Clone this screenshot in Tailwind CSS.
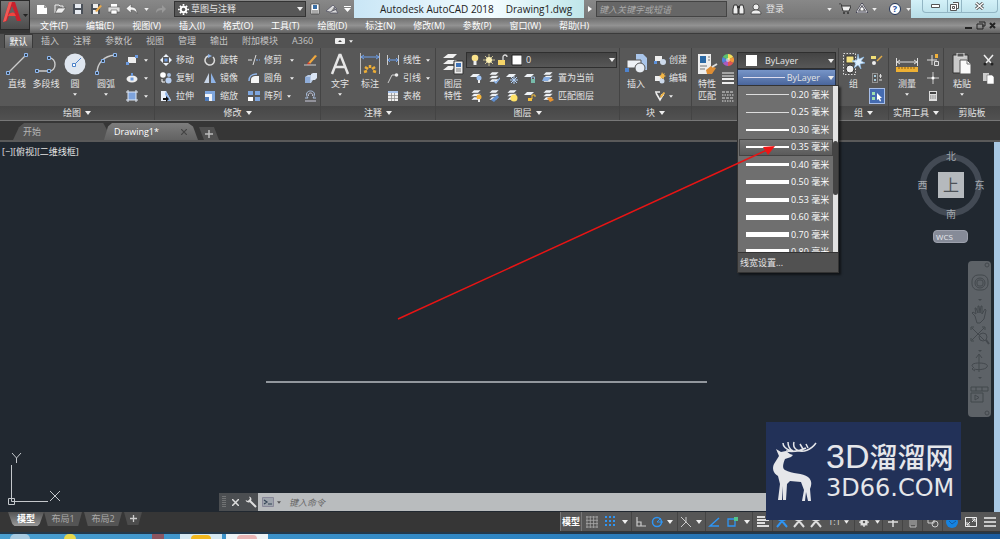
<!DOCTYPE html>
<html lang="zh-CN">
<head>
<meta charset="utf-8">
<title>Autodesk AutoCAD 2018 - Drawing1.dwg</title>
<script src="https://cdn.jsdelivr.net/npm/@tailwindcss/browser@4"></script>
</head>
<body class="flex min-h-screen flex-col overflow-hidden bg-[#363636] font-['Open_Sans','Noto_Sans_CJK_SC',sans-serif] text-[9px] leading-3 text-[#e4e4e4]">
<svg class="hidden">
  <symbol id="dn" viewBox="0 0 6 4"><path d="M0 0h6L3 4z" fill="#eee"/></symbol>
  <symbol id="sheets" viewBox="0 0 12 12"><path d="M4 0h7L8 3H1zM4 3.500h7l-3 3H1zM4 7h7l-3 3H1z" fill="#eef2f6" stroke="#444" stroke-width=".4"/></symbol>
  <symbol id="sheet" viewBox="0 0 12 12"><path d="M3 2h7L7 5H0z" fill="#eef2f6"/></symbol>
  <symbol id="person" viewBox="0 0 12 12"><path d="M6 1v4M6 5L1 11M6 5l5 6M2 3l4 2 4-2" fill="none" stroke="currentColor" stroke-width="2"/></symbol>
</svg>

<!-- title bar and menu bar -->
<header class="flex h-[33px] shrink-0">
  <button class="relative h-[30px] w-[30px] shrink-0 border border-[#2a2a2a] bg-linear-to-b from-[#777] to-[#4c4c4c]" aria-label="应用程序菜单">
    <svg class="h-7 w-7" viewBox="0 0 28 28"><path d="M8 1h6l6 19h-4l-2-5H8l-2 5-4 1z" fill="#c8202c"/><path d="M11 5l3 7H8z" fill="#65605f"/><path d="M8 1h3L5 20l-3 1z" fill="#ed5a56"/><path d="M8 13c3-2 5-2 6 0l1 2H7z" fill="#f0443f"/><path d="M22 13h5l-2.500 3z" fill="#222"/></svg>
  </button>
  <div class="flex min-w-0 flex-1 flex-col">
    <div class="flex h-[18px] items-center bg-linear-to-b from-[#888] to-[#777]">
      <div class="flex w-[144px] shrink-0 items-center gap-[6px] pl-[6px]">
        <button aria-label="新建"><svg class="h-3 w-3" viewBox="0 0 12 12"><path d="M1 2h7l3 3v6H1z" fill="#fff"/><path d="M8 2v3h3z" fill="#999"/></svg></button>
        <button aria-label="打开"><svg class="h-3 w-3" viewBox="0 0 12 12"><path d="M1 10V2h4l1 1h3v2" fill="none" stroke="#eee"/><path d="M1 10l3-5h8l-4 5z" fill="#eee" stroke="#555" stroke-width=".6"/></svg></button>
        <button aria-label="保存"><svg class="h-3 w-3" viewBox="0 0 12 12"><path d="M1 1h10v10H1z" fill="#4a5058"/><path d="M3 1h6v4H3zM3 7h6v4H3z" fill="#e8ecf2"/></svg></button>
        <button aria-label="另存为"><svg class="h-3 w-3" viewBox="0 0 12 12"><path d="M1 1h9v10H1z" fill="#4a5058"/><path d="M3 1h5v4H3zM3 7h5v4H3z" fill="#eee"/><path d="M5 8l5-6 2 1-5 6z" fill="#e9a94b"/></svg></button>
        <button aria-label="打印"><svg class="h-3 w-3" viewBox="0 0 12 12"><path d="M3 1h6v4H3z" fill="#fff"/><path d="M0 4h12v5H0z" fill="#ddd" stroke="#555" stroke-width=".6"/><path d="M3 7h6v4H3z" fill="#fff" stroke="#555" stroke-width=".6"/></svg></button>
        <button aria-label="放弃"><svg class="h-3 w-3" viewBox="0 0 12 12"><path d="M5 1v3c5 0 6 3 6 7-1-3-3-4-6-4v3L0 5.500z" fill="#f4f4f4" stroke="#555" stroke-width=".5"/></svg></button>
        <svg class="h-[3px] w-[5px]"><use href="#dn"/></svg>
        <button aria-label="重做"><svg class="h-3 w-3" viewBox="0 0 12 12"><path d="M7 2v3C3 5 1 6 1 10c1-2 3-3 6-3v3l4-4z" fill="#999"/></svg></button>
      </div>
      <div class="relative h-4 w-[132px] shrink-0 border border-[#333] bg-[#575757]">
        <svg class="absolute top-[2px] left-[3px] h-[11px] w-[11px]" viewBox="0 0 12 12"><circle cx="6" cy="6" r="3" fill="none" stroke="#fff" stroke-width="2"/><path d="M6 0v2M6 10v2M0 6h2M10 6h2M2 2l1.500 1.500M8.500 8.500L10 10M10 2L8.500 3.500M2 10l1.500-1.500" stroke="#fff" stroke-width="1.800"/></svg>
        <select aria-label="工作空间" class="block h-full w-full appearance-none pl-4 text-[9px] leading-3"><option>草图与注释</option></select>
        <svg class="absolute top-[5px] right-[2px] h-1 w-[6px]"><use href="#dn"/></svg>
      </div>
      <div class="flex w-[48px] shrink-0 items-center gap-[5px] pl-1">
        <svg class="h-3 w-[10px]" viewBox="0 0 10 12"><path d="M1 1h8v10H1z" fill="#fff" stroke="#333" stroke-width=".6"/><path d="M3 2h4v4H3z" fill="#3a6ea5"/><path d="M2 8h6M2 10h6" stroke="#555"/></svg>
        <svg class="h-3 w-[14px]" viewBox="0 0 14 12"><path d="M1 8l7-6 4 4-7 3zM5 10h8L9 4" fill="#ddd" stroke="#556" stroke-width=".8"/></svg>
        <svg class="h-[6px] w-[7px]" viewBox="0 0 7 6"><path d="M0 0h7v1H0zM0 2h7L3.500 6z" fill="#fff"/></svg>
      </div>
      <div class="flex h-full min-w-0 flex-1 items-center gap-3 bg-linear-to-r from-[#c9e6f6] via-[#f3fcff] via-60% to-[#bfe6ea] pl-[26px] text-[10px] whitespace-pre text-[#222]"><span>Autodesk AutoCAD 2018</span><span>Drawing1.dwg</span></div>
      <div class="flex h-full w-[416px] shrink-0 items-center">
        <svg class="mx-1 h-[6px] w-1" viewBox="0 0 4 6"><path d="M0 0l4 3-4 3z" fill="#fff"/></svg>
        <input aria-label="搜索" placeholder="键入关键字或短语" class="h-4 w-[131px] border border-[#444] bg-[#666] px-[2px] text-[9px] italic placeholder:text-[#aaa]">
        <div class="flex flex-1 items-center pl-[5px] whitespace-nowrap">
          <svg class="h-3 w-[13px]" viewBox="0 0 13 12"><path d="M2 2h3l1 4v5H1V6zM8 2h3l1 4v5H7V6z" fill="#eee" stroke="#333"/><path d="M5 4h3" stroke="#333" stroke-width="2"/></svg>
          <svg class="ml-[5px] h-3 w-3" viewBox="0 0 12 12"><circle cx="6" cy="4" r="3" fill="#eee" stroke="#333" stroke-width=".7"/><path d="M1 11c0-3 2-4 5-4s5 1 5 4z" fill="#eee" stroke="#333" stroke-width=".7"/></svg>
          <a href="#" class="ml-1">登录</a>
          <svg class="ml-[43px] h-[3px] w-[5px]"><use href="#dn"/></svg>
          <svg class="ml-[7px] h-3 w-3" viewBox="0 0 12 12"><path d="M0 1h2l2 7h6l2-5H3" fill="#eee" stroke="#333"/><circle cx="5" cy="10" r="1" fill="#333"/><circle cx="9" cy="10" r="1" fill="#333"/></svg>
          <svg class="ml-[5px] h-3 w-3" viewBox="0 0 12 12"><path d="M6 1l5 8H1z" fill="none" stroke="#445" stroke-width="2"/><path d="M6 1l5 8H1z" fill="none" stroke="#ddd"/><circle cx="6" cy="6" r="1.500" fill="#fff"/></svg>
          <svg class="ml-[4px] h-[3px] w-[5px]"><use href="#dn"/></svg>
          <button class="ml-3 flex h-3 w-3 items-center justify-center rounded-full border border-[#235] bg-white text-[9px] font-bold text-[#1d4fa0]" aria-label="帮助">?</button>
          <svg class="ml-[5px] h-[3px] w-[5px]"><use href="#dn"/></svg>
        </div>
        <div class="h-full w-[89px] bg-linear-to-b from-[#d3f1f8] to-[#b7dde7] pr-[2px] pl-[11px]">
          <div class="flex h-[13px] rounded-b border border-t-0 border-[#92b6c4] text-[#666]">
            <button aria-label="最小化" class="flex w-[25px] items-center justify-center border-r border-[#92b6c4]"><svg class="h-1 w-[9px]"><path d="M.5.500h8v3h-8z" fill="#fff" stroke="#555"/></svg></button>
            <button aria-label="还原" class="flex w-[14px] items-center justify-center border-r border-[#92b6c4]"><svg class="h-[9px] w-[9px]" viewBox="0 0 9 9"><path d="M3 .5h5.500v6H7M.5 2.500h6v6h-6zM2.500 4.500h2v2h-2z" fill="#fff" stroke="#555"/></svg></button>
            <button aria-label="关闭" class="flex flex-1 items-center justify-center"><svg class="h-2 w-[9px]" viewBox="0 0 9 8"><path d="M1 1l7 6M8 1L1 7" stroke="#555" stroke-width="3"/><path d="M1 1l7 6M8 1L1 7" stroke="#fff" stroke-width="1.300"/></svg></button>
          </div>
        </div>
      </div>
    </div>
    <nav class="flex h-[15px] items-center gap-[18px] bg-linear-to-b from-[#707070] via-[#929292] to-[#606060] pl-[10px] whitespace-nowrap text-white" aria-label="菜单栏">
      <button>文件(F)</button><button>编辑(E)</button><button>视图(V)</button><button>插入(I)</button><button>格式(O)</button><button>工具(T)</button><button>绘图(D)</button><button>标注(N)</button><button>修改(M)</button><button>参数(P)</button><button>窗口(W)</button><button>帮助(H)</button>
      <svg class="mr-1 ml-auto h-[9px] w-8" viewBox="0 0 32 9"><path d="M1 7h7M26 2l5 5M31 2l-5 5" stroke="#222" stroke-width="2"/><path d="M15 1h6v4h-3M13 3h6v5h-6z" fill="none" stroke="#222"/></svg>
    </nav>
  </div>
</header>

<!-- ribbon tabs -->
<nav class="flex h-[15px] shrink-0 items-center gap-[14px] border-t border-[#3b3b3b] bg-[#525252] pl-1 text-[#c4c4c4]" aria-label="功能区">
  <button class="-mr-[6px] h-[14px] w-[29px] border border-b-0 border-[#3a3a3a] bg-linear-to-b from-[#858585] to-[#626262] text-white">默认</button>
  <button>插入</button><button>注释</button><button>参数化</button><button>视图</button><button>管理</button><button>输出</button><button>附加模块</button><button>A360</button>
  <span class="ml-2 flex items-center gap-1"><svg class="h-[6px] w-[10px]" viewBox="0 0 10 6"><rect width="10" height="6" rx="1" fill="#eee"/><path d="M3 4l2-2 2 2z" fill="#444"/></svg><svg class="h-[3px] w-1"><use href="#dn"/></svg></span>
</nav>

<!-- ribbon panels -->
<main class="contents">
<div class="grid h-[73px] shrink-0 grid-cols-[155fr_166fr_115fr_184fr_72fr_147fr_50fr_55fr_56fr] border-b border-[#777] bg-[#585858] whitespace-nowrap">

  <section class="flex min-w-0 flex-col border-r border-[#444]">
    <div class="flex flex-1 pt-[3px] pl-1">
      <button class="flex w-[26px] flex-col items-center gap-[3px] pt-[2px]"><svg class="h-[22px] w-[22px]" viewBox="0 0 22 22"><path d="M2 20L20 2" stroke="#ccc" stroke-width="1.300"/><path d="M.5 18.500h3v3h-3zM18.500.500h3v3h-3z" fill="#345" stroke="#8fb8f0"/></svg>直线</button>
      <button class="flex w-8 flex-col items-center gap-[3px] pt-[2px]"><svg class="h-[22px] w-6" viewBox="0 0 24 22"><path d="M3 18h12c8 0 8-13 0-13" fill="none" stroke="#ccc" stroke-width="1.400"/><path d="M1.500 16.500h3v3h-3zM13.500 16.500h3v3h-3zM13.500 3.500h3v3h-3z" fill="#345" stroke="#8fb8f0"/></svg>多段线</button>
      <button class="flex w-[26px] flex-col items-center gap-[3px] pt-[2px]"><svg class="h-[22px] w-[22px]" viewBox="0 0 22 22"><circle cx="11" cy="11" r="10.500" fill="#dfe6ef"/><path d="M10 12l7-7" stroke="#4d82c8"/><path d="M8.500 10.500h3v3h-3z" fill="#fff" stroke="#4d82c8"/></svg>圆<svg class="h-[3px] w-1"><use href="#dn"/></svg></button>
      <button class="flex w-9 flex-col items-center gap-[3px] pt-[2px]"><svg class="h-[22px] w-[22px]" viewBox="0 0 22 22"><path d="M2 20C2 10 9 3 20 2" fill="none" stroke="#ccc" stroke-width="1.400"/><path d="M.5 18.500h3v3h-3zM6.500 6.500h3v3h-3zM18.500.500h3v3h-3z" fill="#345" stroke="#8fb8f0"/></svg>圆弧<svg class="h-[3px] w-1"><use href="#dn"/></svg></button>
      <div class="grid h-[54px] grid-rows-3 items-center pl-[2px]">
        <button class="flex items-center gap-[6px]" aria-label="矩形"><svg class="h-3 w-3" viewBox="0 0 12 12"><path d="M2 3h8v6H2z" fill="#eee"/><path d="M0 8h3v3H0zM9 1h3v3H9z" fill="#6c9be0"/></svg><svg class="h-[3px] w-1"><use href="#dn"/></svg></button>
        <button class="flex items-center gap-[6px]" aria-label="椭圆"><svg class="h-3 w-3" viewBox="0 0 12 12"><ellipse cx="6" cy="7" rx="5.500" ry="3.500" fill="#eee"/><path d="M4.500 5.500h3v3h-3zM5 1h2v3H5z" fill="#6c9be0"/></svg><svg class="h-[3px] w-1"><use href="#dn"/></svg></button>
        <button class="flex items-center gap-[6px]" aria-label="图案填充"><svg class="h-3 w-3" viewBox="0 0 12 12"><path d="M2 2h8v8H2z" fill="#7ea3dc"/><path d="M2 0v12M10 0v12M0 2h12M0 10h12" stroke="#dfe8f5"/></svg><svg class="h-[3px] w-1"><use href="#dn"/></svg></button>
      </div>
    </div>
    <h2 class="flex h-[14px] items-center justify-center gap-1 bg-linear-to-b from-[#474747] to-[#515151]">绘图 <svg class="h-[4px] w-[6px]"><use href="#dn"/></svg></h2>
  </section>

  <section class="flex min-w-0 flex-col border-r border-[#444]">
    <div class="flex flex-1 gap-[10px] pt-[3px] pl-[5px]">
      <div class="grid h-[54px] grid-rows-3 items-center">
        <button class="flex items-center gap-1"><svg class="h-3 w-3" viewBox="0 0 12 12"><path d="M6 0l3 3H3zM6 12l3-3H3zM0 6l3-3v6zM12 6L9 3v6z" fill="#eef3fa"/><path d="M4.500 4.500h3v3h-3z" fill="#6c9be0"/></svg>移动</button>
        <button class="flex items-center gap-1"><svg class="h-3 w-3" viewBox="0 0 12 12"><circle cx="3" cy="3" r="2.800" fill="#fff"/><circle cx="9" cy="3" r="2" fill="#a7bddd"/><circle cx="8.500" cy="8.500" r="3" fill="#b9d0f2"/><path d="M2 7v3h3" fill="none" stroke="#fff"/></svg>复制</button>
        <button class="flex items-center gap-1"><svg class="h-3 w-3" viewBox="0 0 12 12"><path d="M1 1h5l5 9v1H1z" fill="#e9eff8"/><path d="M6 1l5 10H8L5 4z" fill="#8fb4e8"/><path d="M3 8h3V6l3 3-3 3v-2H3z" fill="#111"/></svg>拉伸</button>
      </div>
      <div class="grid h-[54px] grid-rows-3 items-center">
        <button class="flex items-center gap-1"><svg class="h-3 w-3" viewBox="0 0 12 12"><path d="M4 2a4.700 4.700 0 1 0 5 1" fill="none" stroke="#ddd" stroke-width="1.500"/><path d="M4 0l4 2-4 2z" fill="#8fb4e8"/></svg>旋转</button>
        <button class="flex items-center gap-1"><svg class="h-3 w-3" viewBox="0 0 12 12"><path d="M5 1v10H0z" fill="#c7d4e6"/><path d="M7 1v10h5z" fill="#8fb4e8"/></svg>镜像</button>
        <button class="flex items-center gap-1"><svg class="h-3 w-3" viewBox="0 0 12 12"><path d="M1 1h10v10H1z" fill="#7ea6de"/><path d="M1 4h7v7H1z" fill="#f2f5fa"/><path d="M1 7h4v4H1z" fill="#4c79b9"/></svg>缩放</button>
      </div>
      <div class="grid h-[54px] grid-rows-3 items-center">
        <button class="flex items-center gap-1"><svg class="h-3 w-3" viewBox="0 0 12 12"><path d="M0 6h4M5 11l3-10" stroke="#ddd"/><path d="M8 6h4" stroke="#7daaf0" stroke-dasharray="2 1"/></svg>修剪<svg class="ml-1 h-[3px] w-1"><use href="#dn"/></svg></button>
        <button class="flex items-center gap-1"><svg class="h-3 w-3" viewBox="0 0 12 12"><path d="M3 11V8c0-3 2-4 5-4h3v7z" fill="#f4f4f4"/><path d="M1 9c0-5 2-7 8-7" stroke="#8fb4e8" fill="none" stroke-width="1.500"/></svg>圆角<svg class="ml-1 h-[3px] w-1"><use href="#dn"/></svg></button>
        <button class="flex items-center gap-1"><svg class="h-3 w-3" viewBox="0 0 12 12"><path d="M0 1h5v4H0zM7 1h5v4H7zM7 7h5v4H7z" fill="#7ea6de"/><path d="M0 7h5v4H0z" fill="#fff"/></svg>阵列<svg class="ml-px h-[3px] w-1"><use href="#dn"/></svg></button>
      </div>
      <div class="grid h-[54px] grid-rows-3 items-center">
        <button aria-label="删除"><svg class="h-3 w-[13px]" viewBox="0 0 13 12"><path d="M4 9l7-8 2 1-7 8z" fill="#f0a83e"/><path d="M3 11l1-3 3 2z" fill="#d8432f"/><path d="M0 11h12" stroke="#ccc"/></svg></button>
        <button aria-label="分解"><svg class="h-3 w-[13px]" viewBox="0 0 13 12"><path d="M1 5l3-2h5v5l-2 3H1z" fill="#b9cbe5"/><path d="M7 2l2-1h4v5l-2 2H7z" fill="#dbe6f5"/><path d="M1 5h5v6H1z" fill="#8fadd9"/></svg></button>
        <button aria-label="偏移"><svg class="h-3 w-[13px]" viewBox="0 0 13 12"><path d="M1 8h3C1 4 3 1 6.500 1S12 4 9 8h3" fill="none" stroke="#a9bfdf"/><path d="M1 11h11M4.500 6c-1-2 1-3 2-3s3 1 2 3" fill="none" stroke="#ccd"/></svg></button>
      </div>
    </div>
    <h2 class="flex h-[14px] items-center justify-center gap-1 bg-linear-to-b from-[#474747] to-[#515151]">修改 <svg class="h-[4px] w-[6px]"><use href="#dn"/></svg></h2>
  </section>

  <section class="flex min-w-0 flex-col border-r border-[#444]">
    <div class="flex flex-1 pt-[3px] pl-1">
      <button class="flex w-[30px] flex-col items-center gap-[3px] pt-[2px]"><svg class="h-[22px] w-[22px]" viewBox="0 0 22 22"><path d="M3 21L10.500 2h1L19 21M6 14h10" fill="none" stroke="#e6e6e6" stroke-width="2.500"/></svg>文字<svg class="h-[3px] w-1"><use href="#dn"/></svg></button>
      <button class="flex w-[30px] flex-col items-center gap-[3px] pt-[2px]"><svg class="h-[22px] w-[22px]" viewBox="0 0 22 22"><path d="M1.500 0v21M20.500 0v21" stroke="#bbb"/><path d="M2 4h18M5 2L2 4l3 2M17 2l3 2-3 2" fill="none" stroke="#6da0ed"/><path d="M5 19l3-1M6 14l3 2M11 12v3M16 14l-3 2M17 19l-3-1" stroke="#edae37" stroke-width="2.500"/></svg>标注</button>
      <div class="grid h-[54px] grid-rows-3 items-center pl-[2px]">
        <button class="flex items-center gap-1"><svg class="h-3 w-3" viewBox="0 0 12 12"><path d="M.5 1v10M11.500 1v10" stroke="#ccc"/><path d="M1 6h10M3 4L1 6l2 2M9 4l2 2-2 2" fill="none" stroke="#6da0ed"/></svg>线性<svg class="ml-px h-[3px] w-1"><use href="#dn"/></svg></button>
        <button class="flex items-center gap-1"><svg class="h-3 w-3" viewBox="0 0 12 12"><path d="M1 11l4-8h4" fill="none" stroke="#ccc"/><circle cx="9.500" cy="3" r="1.800" fill="#eee"/></svg>引线<svg class="ml-px h-[3px] w-1"><use href="#dn"/></svg></button>
        <button class="flex items-center gap-1"><svg class="h-3 w-3" viewBox="0 0 12 12"><path d="M1 1h10v10H1z" fill="#eee"/><path d="M1 1h10v2H1z" fill="#a8c3ea"/><path d="M4.500 3v8M7.500 3v8M1 5.500h10M1 8.500h10" stroke="#888" stroke-width=".7"/></svg>表格</button>
      </div>
    </div>
    <h2 class="flex h-[14px] items-center justify-center gap-1 bg-linear-to-b from-[#474747] to-[#515151]">注释 <svg class="h-[4px] w-[6px]"><use href="#dn"/></svg></h2>
  </section>

  <section class="flex min-w-0 flex-col border-r border-[#444]">
    <div class="flex flex-1 pt-[3px] pr-[2px] pl-1">
      <button class="flex w-[26px] flex-col items-center pt-[2px]"><svg class="mb-[3px] h-[22px] w-[22px]" viewBox="0 0 22 22"><path d="M6 1h9l-4 4H1zM6 7h9l-4 4H1zM6 13h8l-4 4H1z" fill="#f0f0f0"/><path d="M12 8h9v13h-9z" fill="#eee" stroke="#333"/><path d="M14 10h5v4h-5z" fill="#3f73b8"/><path d="M14 16h5M14 18h5" stroke="#777"/></svg>图层<br>特性</button>
      <div class="grid h-[54px] min-w-0 flex-1 grid-rows-3 items-center">
        <div class="relative h-4 border border-[#2f2f2f] bg-linear-to-b from-[#444] to-[#575757]">
          <svg class="absolute top-[1px] left-[3px] h-3 w-[52px]" viewBox="0 0 52 12"><circle cx="5" cy="4" r="3.300" fill="#fbe38b"/><path d="M3.500 7h3v4h-3z" fill="#eee"/><path d="M19 0v12M13 6h12M15 2l8 8M23 2l-8 8" stroke="#e7d9a0" stroke-width=".8"/><circle cx="19" cy="6" r="3" fill="#fff3b5"/><path d="M28 6h7v5h-7z" fill="#f5d468"/><path d="M33 6V3a2 2 0 0 1 4 0" fill="none" stroke="#ddd" stroke-width="1.300"/><path d="M42 1h10v10H42z" fill="#fff" stroke="#222"/></svg>
          <select aria-label="图层" class="block h-full w-full appearance-none pl-[59px] text-[9px] leading-3"><option>0</option></select>
          <svg class="absolute top-[5px] right-[1px] h-1 w-[6px]"><use href="#dn"/></svg>
        </div>
        <div class="flex items-center gap-[6px] pl-1">
          <svg class="h-3 w-3" viewBox="0 0 12 12"><use href="#sheet"/><circle cx="9" cy="6" r="2.500" fill="#9fc4f5"/><path d="M8 8h2v3H8z" fill="#eee"/></svg>
          <svg class="h-3 w-3" viewBox="0 0 12 12"><use href="#sheets"/><path d="M6 9l2 2 4-5" fill="none" stroke="#8db6ee" stroke-width="1.300"/></svg>
          <svg class="h-3 w-3" viewBox="0 0 12 12"><use href="#sheet"/><path d="M8 4v8M4 8h8M5 5l6 6M11 5l-6 6" stroke="#b0cff7"/></svg>
          <svg class="h-3 w-3" viewBox="0 0 12 12"><use href="#sheet"/><path d="M7 7h4v4H7z" fill="#7ba"/><path d="M7.500 7V5h3v2" fill="none" stroke="#9bd"/></svg>
          <button class="flex items-center gap-1"><svg class="h-3 w-3" viewBox="0 0 12 12"><use href="#sheets"/><path d="M2 5h7l-3 4H0z" fill="#88aee2"/></svg>置为当前</button>
        </div>
        <div class="flex items-center gap-[6px] pl-1">
          <svg class="h-3 w-3" viewBox="0 0 12 12"><use href="#sheets"/><circle cx="9" cy="7" r="2.500" fill="#f7b63c"/><path d="M8 9h2v3H8z" fill="#eee"/></svg>
          <svg class="h-3 w-3" viewBox="0 0 12 12"><use href="#sheets"/><path d="M3 10l6-5 2 2-5 5z" fill="#608fd0"/></svg>
          <svg class="h-3 w-3" viewBox="0 0 12 12"><use href="#sheets"/><circle cx="8" cy="8" r="3.500" fill="#ffe267"/></svg>
          <svg class="h-3 w-3" viewBox="0 0 12 12"><use href="#sheet"/><path d="M4 8h4v3H4z" fill="#f4bf3c"/><path d="M8 9V5h3v2" fill="none" stroke="#f4bf3c"/></svg>
          <button class="flex items-center gap-1"><svg class="h-3 w-3" viewBox="0 0 12 12"><use href="#sheets"/><path d="M5 8l4-1 3 3-4 2z" fill="#e8932f"/></svg>匹配图层</button>
        </div>
      </div>
    </div>
    <h2 class="flex h-[14px] items-center justify-center gap-1 bg-linear-to-b from-[#474747] to-[#515151]">图层 <svg class="h-[4px] w-[6px]"><use href="#dn"/></svg></h2>
  </section>

  <section class="flex min-w-0 flex-col border-r border-[#444]">
    <div class="flex flex-1 gap-1 pt-[3px] pl-1">
      <button class="flex w-[24px] flex-col items-center gap-[3px] pt-[2px]"><svg class="h-[22px] w-6" viewBox="0 0 24 22"><path d="M12 1h7l4 4v12H12z" fill="#a9c5ea"/><path d="M3 7h14v8H3z" fill="#eef1f5" stroke="#555"/><circle cx="16" cy="15" r="5" fill="#e7ecf2" stroke="#555"/><path d="M1 15h4v4H1z" fill="#4f84cf"/></svg>插入</button>
      <div class="grid h-[54px] grid-rows-3 items-center pl-[2px]">
        <button class="flex items-center gap-[3px]"><svg class="h-3 w-3" viewBox="0 0 12 12"><path d="M1 2h7v5H1z" fill="#eee"/><circle cx="9" cy="8" r="3" fill="#ccd9ea"/><path d="M0 7h3v3H0z" fill="#5c90d9"/></svg>创建</button>
        <button class="flex items-center gap-[3px]"><svg class="h-3 w-3" viewBox="0 0 12 12"><path d="M1 4h7v5H1z" fill="#eee"/><circle cx="8" cy="9" r="2.500" fill="#ccd9ea"/><path d="M8 0l1 2 2-1-1 2 2 1-2 1 0 2-2-1-2 1 1-2-2-1 2-1z" fill="#f2b545"/></svg>编辑</button>
        <button class="flex items-center gap-[3px]" aria-label="块属性"><svg class="h-3 w-3" viewBox="0 0 12 12"><path d="M2 3l4 7 4-7M1 2h5M7 5h3" fill="none" stroke="#eee" stroke-width="1.600"/><path d="M6 6l4-4 1 1-4 5z" fill="#efb13e"/></svg><svg class="h-[3px] w-1"><use href="#dn"/></svg></button>
      </div>
    </div>
    <h2 class="flex h-[14px] items-center justify-center gap-1 bg-linear-to-b from-[#474747] to-[#515151]">块 <svg class="h-[4px] w-[6px]"><use href="#dn"/></svg></h2>
  </section>

  <section class="flex min-w-0 flex-col border-r border-[#444]">
    <div class="flex flex-1 pt-[3px] pr-[2px] pl-[3px]">
      <button class="flex w-[24px] flex-col items-center pt-[2px]"><svg class="mb-[3px] h-[22px] w-[22px]" viewBox="0 0 22 22"><path d="M2 1h13v20H2z" fill="#eee"/><path d="M4 3h6v7H4z" fill="#2b69a5"/><path d="M12 4h2M12 7h2M4 13h7M4 16h5" stroke="#777"/><path d="M10 17l5-4 5 2-4 6h-5z" fill="#dd8d34"/><path d="M16 14l5-3" stroke="#ddd" stroke-width="2"/></svg>特性<br>匹配</button>
      <div class="grid h-[54px] w-[18px] grid-rows-3 items-center justify-items-center">
        <svg class="h-3 w-3" viewBox="0 0 12 12"><path d="M6 6V0a6 6 0 0 1 5.200 3z" fill="#f4e05a"/><path d="M6 6l5.200-3a6 6 0 0 1 0 6z" fill="#f39a3b"/><path d="M6 6l5.200 3A6 6 0 0 1 6 12z" fill="#e35555"/><path d="M6 6v6A6 6 0 0 1 .8 9z" fill="#a85bc0"/><path d="M6 6L.8 9a6 6 0 0 1 0-6z" fill="#5085dc"/><path d="M6 6L.8 3A6 6 0 0 1 6 0z" fill="#5cc06d"/><circle cx="6" cy="6" r="2" fill="#fff8"/></svg>
        <svg class="h-3 w-3" viewBox="0 0 12 12"><path d="M0 1h12M0 4h12" stroke="#eee"/><path d="M0 7h12M0 11h12" stroke="#eee" stroke-width="2"/></svg>
        <svg class="h-3 w-3" viewBox="0 0 12 12"><path d="M0 2h12M0 8h12" stroke="#ddd" stroke-dasharray="3 1"/><path d="M0 5h12M0 11h12" stroke="#ddd" stroke-dasharray="1.500 1"/></svg>
      </div>
      <div class="relative min-w-0 flex-1 pt-[1px]">
        <div class="relative h-[17px] border border-[#2f2f2f] bg-linear-to-b from-[#444] to-[#575757]">
          <span class="absolute top-[2px] left-2 h-[11px] w-[11px] bg-white"></span>
          <select aria-label="颜色" class="block h-full w-full appearance-none pl-[27px] text-[9px] leading-3"><option>ByLayer</option></select>
          <svg class="absolute top-[6px] right-[1px] h-1 w-[6px]"><use href="#dn"/></svg>
        </div>
        <button class="flex h-[17px] w-full items-center border border-[#26344c] bg-linear-to-b from-[#7795c8] to-[#4a669c] pr-[1px] pl-[5px]" aria-expanded="true" aria-haspopup="listbox"><span class="mr-[2px] h-px flex-1 bg-[#dde]"></span>ByLayer<svg class="ml-2 h-1 w-[6px]"><use href="#dn"/></svg></button>
        <!-- lineweight list -->
        <div class="absolute top-[34px] left-0 z-10 w-[102px] border border-[#333] bg-[#6f6f6f] shadow-[2px_2px_2px_#0008]">
          <div class="flex h-[166px] overflow-hidden">
            <div role="listbox" aria-label="线宽" class="grid h-[175px] flex-1 grid-rows-10 pl-[1px] text-white">
              <div role="option" class="flex items-center gap-[2px] pl-[7px]"><i class="h-px w-[43px] bg-[#ddd]"></i>0.20 毫米</div>
              <div role="option" class="flex items-center gap-[2px] pl-[7px]"><i class="h-px w-[43px] bg-[#ddd]"></i>0.25 毫米</div>
              <div role="option" class="flex items-center gap-[2px] pl-[7px]"><i class="h-[2px] w-[43px] bg-white"></i>0.30 毫米</div>
              <div role="option" aria-selected="true" class="flex items-center gap-[2px] bg-linear-to-b from-[#777] to-[#595959] pl-[7px] outline outline-[#444] -outline-offset-1"><i class="h-[2px] w-[43px] bg-white"></i>0.35 毫米</div>
              <div role="option" class="flex items-center gap-[2px] pl-[7px]"><i class="h-[3px] w-[43px] bg-white"></i>0.40 毫米</div>
              <div role="option" class="flex items-center gap-[2px] pl-[7px]"><i class="h-[4px] w-[43px] bg-white"></i>0.50 毫米</div>
              <div role="option" class="flex items-center gap-[2px] pl-[7px]"><i class="h-[4px] w-[43px] bg-white"></i>0.53 毫米</div>
              <div role="option" class="flex items-center gap-[2px] pl-[7px]"><i class="h-[5px] w-[43px] bg-white"></i>0.60 毫米</div>
              <div role="option" class="flex items-center gap-[2px] pl-[7px]"><i class="h-[5px] w-[43px] bg-white"></i>0.70 毫米</div>
              <div role="option" class="flex items-center gap-[2px] pl-[7px]"><i class="h-[6px] w-[43px] bg-white"></i>0.80 毫米</div>
            </div>
            <div class="w-[5px] bg-[#e2e2e2] pt-[55px]"><div class="h-[54px] rounded-sm bg-[#444]"></div></div>
          </div>
          <button class="block h-5 w-full border-t border-[#333] bg-[#515151] pl-[2px] text-left">线宽设置...</button>
        </div>
      </div>
    </div>
    <h2 class="flex h-[14px] items-center bg-linear-to-b from-[#474747] to-[#515151]" aria-label="特性"></h2>
  </section>

  <section class="flex min-w-0 flex-col border-r border-[#444]">
    <div class="flex flex-1 gap-1 pt-[3px] pl-[3px]">
      <button class="flex w-[23px] flex-col items-center gap-[3px] pt-[2px]"><svg class="h-[22px] w-[23px]" viewBox="0 0 23 22"><path d="M1.500.500h12v21h-12z" fill="none" stroke="#ddd" stroke-dasharray="1.500 1.500"/><path d="M4 3h8v7H4z" fill="#f4e282" stroke="#333"/><circle cx="8" cy="16" r="4" fill="#eee" stroke="#333"/><path d="M16 1l1 5 5-2-3 4 4 2-5 1 1 5-3-4-4 3 2-5-4-2 5-1z" fill="#dff0ff" stroke="#8dc0ee" stroke-width=".6"/></svg>组</button>
      <div class="grid h-[54px] grid-rows-3 items-center justify-items-center">
        <button aria-label="取消编组"><svg class="h-3 w-3" viewBox="0 0 12 12"><path d="M0 2h5v3H0z" fill="#f1de77"/><circle cx="3" cy="9" r="2" fill="#eee"/><path d="M6 7l5-5" stroke="#e0aa46" stroke-width="1.500"/></svg></button>
        <button aria-label="组编辑"><svg class="h-3 w-3" viewBox="0 0 12 12"><path d="M1.500 1.500h5v9h-5z" fill="none" stroke="#ccc" stroke-dasharray="1 1"/><path d="M3 3h2v2H3zM3 7h2v2H3z" fill="#acd"/><path d="M8 4h3M8 8h3M9.500 2v4" stroke="#ddd"/></svg></button>
        <button aria-label="组选择" class="flex h-4 w-4 items-center justify-center border border-[#a6bde8] bg-[#456bb0]"><svg class="h-3 w-3" viewBox="0 0 12 12"><path d="M1 2h3v3H1zM1 7h3v3H1z" fill="#9fe0b0"/><path d="M6 3l5 5H9l1 3-1 .5L7.500 9 6 10z" fill="#fff"/></svg></button>
      </div>
    </div>
    <h2 class="flex h-[14px] items-center justify-center gap-1 bg-linear-to-b from-[#474747] to-[#515151]">组 <svg class="h-[4px] w-[6px]"><use href="#dn"/></svg></h2>
  </section>

  <section class="flex min-w-0 flex-col border-r border-[#444]">
    <div class="flex flex-1 gap-[9px] pt-[3px] pl-[7px]">
      <button class="flex w-[22px] flex-col items-center gap-[3px] pt-[2px]"><svg class="h-[22px] w-[22px]" viewBox="0 0 22 22"><path d="M.5 5v8M21.500 5v8M1 9h20M4 7L1 9l3 2M18 7l3 2-3 2" fill="none" stroke="#ddd"/><path d="M0 14h22v5H0z" fill="#eeb033"/><path d="M3 14v2M6 14v2M9 14v2M12 14v2M15 14v2M18 14v2" stroke="#8b5d11"/></svg>测量<svg class="h-[3px] w-1"><use href="#dn"/></svg></button>
      <div class="grid h-[54px] grid-rows-3 items-center">
        <svg class="h-3 w-3" viewBox="0 0 12 12"><path d="M5 1v10M0 6h10" stroke="#ddd"/><path d="M8 0h3v4H8z" fill="#efb03b"/><path d="M7.500 7.500h4v4h-4z" fill="#666" stroke="#ddd"/></svg>
        <svg class="h-3 w-3" viewBox="0 0 12 12"><path d="M6 0v12M0 6h12" stroke="#ccc"/><circle cx="6" cy="6" r="1.500" fill="#fff"/></svg>
        <svg class="h-3 w-3" viewBox="0 0 12 12"><path d="M2 1h8v10H2z" fill="#ddd"/><path d="M3 2h6v2H3z" fill="#444"/><path d="M3 6h6M3 8h6" stroke="#777" stroke-dasharray="1.500 .7"/></svg>
      </div>
    </div>
    <h2 class="flex h-[14px] items-center justify-center gap-1 bg-linear-to-b from-[#474747] to-[#515151]">实用工具 <svg class="h-[4px] w-[6px]"><use href="#dn"/></svg></h2>
  </section>

  <section class="flex min-w-0 flex-col">
    <div class="flex flex-1 gap-[10px] pt-[3px] pl-[7px]">
      <button class="flex w-[22px] flex-col items-center gap-[3px] pt-[2px]"><svg class="h-[22px] w-[22px]" viewBox="0 0 22 22"><path d="M2 2h15v18H2z" fill="#c9c9c9" stroke="#333"/><path d="M6 0h7v4H6z" fill="#555" stroke="#ddd"/><path d="M9 7h7l4 4v10H9z" fill="#fafafa" stroke="#555"/><path d="M16 7v4h4" fill="none" stroke="#777"/></svg>粘贴<svg class="h-[3px] w-1"><use href="#dn"/></svg></button>
      <div class="grid h-[54px] grid-rows-3 items-center">
        <button aria-label="剪切"><svg class="h-3 w-[11px]" viewBox="0 0 11 12"><path d="M1 1l7 8M10 1L3 9" stroke="#eee" stroke-width="1.500"/><circle cx="2" cy="10" r="1.500" fill="#222"/><circle cx="9" cy="10" r="1.500" fill="#222"/></svg></button>
        <button aria-label="复制"><svg class="h-3 w-[11px]" viewBox="0 0 11 12"><path d="M0 1h6v8H0z" fill="#ccc"/><path d="M4 3h5l2 2v7H4z" fill="#fff" stroke="#666" stroke-width=".6"/></svg></button>
      </div>
    </div>
    <h2 class="flex h-[14px] items-center justify-center bg-linear-to-b from-[#474747] to-[#515151]">剪贴板</h2>
  </section>
</div>

<!-- drawing tabs -->
<div class="flex h-[21px] shrink-0 items-end border-b-2 border-[#5a5a5a] bg-[#363636] pl-[13px]">
  <button class="h-[17px] w-[94px] bg-[#545454] pl-[10px] text-left text-[#b4b4b4] [clip-path:polygon(0_100%,6px_25%,11px_0,96%_0,100%_40%,100%_100%)]">开始</button>
  <div class="-ml-[3px] flex h-[17px] w-[94px] items-center justify-between bg-linear-to-b from-[#7d7d7d] to-[#626262] pr-[11px] pl-[10px] text-white [clip-path:polygon(0_100%,4px_20%,8px_0,84px_0,89px_20%,100%_100%)]"><button>Drawing1*</button><button aria-label="关闭图形"><svg class="h-[6px] w-[6px]" viewBox="0 0 6 6"><path d="M0 0l6 6M6 0L0 6" stroke="#444" stroke-width="1.200"/></svg></button></div>
  <button aria-label="新图形" class="ml-[1px] flex h-[13px] w-5 items-center justify-center bg-[#505050] [clip-path:polygon(0_0,75%_0,100%_100%,25%_100%)]"><svg class="h-2 w-2" viewBox="0 0 8 8"><path d="M4 0v8M0 4h8" stroke="#bbb" stroke-width="1.500"/></svg></button>
</div>

<!-- drawing area -->
<div class="relative min-h-[370px] flex-1 border-r-6 border-[#a9c9e4] bg-[#212830]">
  <p class="pt-1 pl-[2px]">[−][俯视][二维线框]</p>

  <svg class="absolute top-[238px] left-[266px] h-[4px] w-[441px]"><path d="M0 2h441" stroke="#b9bdc2" stroke-width="1.500"/></svg>
  <svg class="absolute top-0 left-[390px] z-20 h-[184px] w-[390px] overflow-visible" viewBox="0 0 390 184"><path d="M8 177L377 8" stroke="#e81414" stroke-width="1.500"/><path d="M385 4l-12 1 5 8z" fill="#f01414"/></svg>

  <!-- UCS icon -->
  <div class="absolute bottom-[4px] left-[7px] h-[60px] w-[60px] text-[#c4c8cc]">
    <svg class="h-full w-full" viewBox="0 0 60 60" fill="none" stroke="currentColor"><path d="M4.500 17v36.500H41M1.500 50.500h6v6h-6z"/><path d="M43 43l10 10M53 43L43 53"/><path d="M5 5l4.500 5 4.500-5M9.500 10v5"/></svg>
  </div>

  <!-- view cube -->
  <div class="absolute top-[7px] right-[8px] grid w-[70px] grid-cols-[13px_44px_13px] grid-rows-[14px_44px_14px] place-items-center text-[10px] text-[#a5aab0]">
    <span class="z-10 col-start-2 row-start-1">北</span><span class="z-10 col-start-1 row-start-2">西</span>
    <div class="col-start-2 row-start-2 flex h-[62px] w-[62px] items-center justify-center rounded-full border-6 border-[#434a54]"><button class="flex h-[26px] w-[26px] items-center justify-center bg-[#b5b9bd] text-[16px] text-[#4d5257]">上</button></div>
    <span class="z-10 col-start-3 row-start-2">东</span><span class="z-10 col-start-2 row-start-3">南</span>
  </div>
  <button class="absolute top-[88px] right-[26px] h-[13px] w-[35px] rounded-sm border border-[#9da1ad] bg-[#868b98] pl-[2px] text-left text-[8px] leading-[10px] text-[#e6e8ee]">WCS</button>

  <!-- navigation bar -->
  <div class="absolute top-[119px] right-[3px] flex h-[156px] w-[23px] flex-col items-center rounded-sm bg-[#5d6267] text-[#43484d]">
    <svg class="h-full w-full" viewBox="0 0 23 156" fill="none" stroke="currentColor"><circle cx="19" cy="4" r="2"/><rect x="4" y="14" width="16" height="15" rx="6"/><circle cx="12" cy="22" r="5"/><rect x="9" y="19" width="6" height="6" rx="2"/><path d="M10 38h4l-2 2zM10 89h4l-2 2zM10 116h4l-2 2z" fill="currentColor" stroke="none"/><path d="M7 55l-3-3 1-1 3 2-1-6h1l2 5 0-7h1l1 7 1-7h1l0 8 3-5 1 1-2 9-4 4H9z"/><path d="M4 67l12 12M16 67L4 79M3 69v-3h3M14 66h3v3M3 77v3h3"/><circle cx="15" cy="76" r="4"/><path d="M18 79l3 4" stroke-width="2"/><path d="M11 94v17M8 97l3-4 3 4M5 106c-3-3 2-4 6-4s10 1 8 4-10 3-13 2M6 106l-2 2 3 2"/><path d="M3 126h17v4H3zM8 126v4M14 126v4M3 132h12v9H3zM7 134v5l4-2.500z"/><circle cx="19" cy="152" r="2"/></svg>
  </div>

  <!-- command line -->
  <div class="absolute bottom-[1px] left-[219px] flex h-[18px] w-[600px] items-center bg-[#b9bcbe]">
    <div class="flex h-full w-[39px] items-center gap-[6px] bg-[#4b4e51] pl-[3px]"><svg class="h-3 w-1" viewBox="0 0 4 12"><path d="M1 0v12M3 0v12" stroke="#999" stroke-dasharray="1 1"/></svg><svg class="h-[7px] w-[7px]" viewBox="0 0 7 7"><path d="M0 0l7 7M7 0L0 7" stroke="#ddd" stroke-width="1.500"/></svg><svg class="h-3 w-3" viewBox="0 0 12 12"><path d="M4 4l7 7" stroke="#ddd" stroke-width="2"/><path d="M4 .5a3 3 0 1 1-3.500 3.500L3 5l2-2z" fill="#ddd"/></svg></div>
    <svg class="ml-1 h-3 w-3" viewBox="0 0 12 12"><path d="M.5 1.500h11v9H.5z" fill="#9fa5ad" stroke="#889"/><path d="M2 4l3 2-3 2M6 8h4" fill="none" stroke="#345" stroke-width="1.200"/></svg>
    <svg class="ml-[3px] h-[3px] w-1" viewBox="0 0 6 4"><path d="M0 0h6L3 4z" fill="#555"/></svg>
    <input aria-label="命令" placeholder="键入命令" class="ml-2 h-full min-w-0 flex-1 text-[9px] text-[#333] italic placeholder:text-[#666]">
  </div>

  <!-- watermark -->
  <div class="absolute right-[33px] -bottom-2 z-30 flex h-[98px] w-[195px] items-center gap-[8px] bg-[#223158] pl-[6px] text-[#e5e6ea]">
    <svg class="h-[62px] w-[46px] shrink-0" viewBox="0 0 46 62"><path d="M4 9l5 3 5-1 4 3 3 1-2 2-6 2c-2 5-3 9 0 11 7 4 18 3 23 7 5 4 3 9 2 12l1 12h-3l-2-9-1 9h-3l2-11-3-8-11-1-3 3-1 16h-3l0-14-1 14H6l2-16-2-8C1 33 0 28 2 24l5-8z" fill="currentColor"/><path d="M14 11c6 1 14 0 20-3M19 11c-5-2-8-4-8-8M21 11c-4-2-5-5-5-9M25 10c-3-2-4-5-3-8M25 10c6 3 14 0 19-7M31 9l-3-5M36 8l-2-4" fill="none" stroke="currentColor" stroke-width="1.500"/></svg>
    <div class="whitespace-nowrap">
      <div class="flex items-center text-[28px] leading-[34px] font-medium"><span class="font-['Liberation_Sans',sans-serif] text-[34px]">3D</span><span class="font-['Noto_Sans_CJK_SC',sans-serif]">溜溜网</span></div>
      <div class="font-['DejaVu_Sans',sans-serif] text-[24px] leading-[30px]">3D66.COM</div>
    </div>
  </div>
</div>
</main>

<!-- layout tabs and status bar -->
<footer class="shrink-0">
  <div class="flex h-[20px] items-start justify-between bg-[#363636]">
    <nav class="flex pl-2 text-[#aaa]" aria-label="布局">
      <button class="h-[14px] w-9 bg-linear-to-b from-[#555] to-[#999] font-bold text-white [clip-path:polygon(0_0,100%_0,88%_85%,82%_100%,18%_100%,12%_85%)]">模型</button>
      <button class="h-[14px] w-[38px] bg-[#545454] [clip-path:polygon(0_0,100%_0,90%_100%,10%_100%)]">布局1</button>
      <button class="ml-[2px] h-[14px] w-[38px] bg-[#545454] [clip-path:polygon(0_0,100%_0,90%_100%,10%_100%)]">布局2</button>
      <button aria-label="新建布局" class="ml-[2px] flex h-[13px] w-[18px] items-center justify-center bg-[#4c4c4c] [clip-path:polygon(0_0,100%_0,80%_100%,20%_100%)]"><svg class="h-[7px] w-[7px]" viewBox="0 0 8 8"><path d="M4 0v8M0 4h8" stroke="#ccc" stroke-width="1.500"/></svg></button>
    </nav>
    <div class="flex h-[19px] shrink-0 items-center divide-x divide-[#444] bg-[#565656] whitespace-nowrap text-[#ddd]">
      <button class="h-full w-[22px] border-l border-[#777] font-bold text-white">模型</button>
      <div class="flex h-full w-[50px] items-center gap-[6px] pl-1"><svg class="h-3 w-3 shrink-0" viewBox="0 0 12 12"><path d="M1 0v12M4.300 0v12M7.600 0v12M11 0v12M0 1h12M0 4.300h12M0 7.600h12M0 11h12" stroke="#aaa" stroke-width=".8"/></svg><svg class="h-3 w-3 shrink-0" viewBox="0 0 12 12"><path d="M2 0v12M6 0v12M10 0v12" stroke="#2f95f3" stroke-width="2" stroke-dasharray="2 2"/></svg><svg class="h-1 w-[6px]"><use href="#dn"/></svg></div>
      <div class="flex h-full w-[46px] items-center gap-1 pl-[3px]"><svg class="h-3 w-3" viewBox="0 0 12 12"><path d="M2 1v9h9M2 6h4v4" fill="none" stroke="#ccc" stroke-width="1.200"/></svg><svg class="h-3 w-3" viewBox="0 0 12 12"><circle cx="6" cy="6" r="4.500" fill="none" stroke="#2f95f3" stroke-width="1.500"/><path d="M6 6h6M6 6l4-4" stroke="#2f95f3"/></svg><svg class="h-1 w-[6px]"><use href="#dn"/></svg></div>
      <div class="flex h-full w-[28px] items-center gap-1 pl-[2px]"><svg class="h-3 w-3" viewBox="0 0 12 12"><path d="M1 1l10 10M6 6V1M6 6l-5 5" stroke="#ccc"/></svg><svg class="h-1 w-[6px]"><use href="#dn"/></svg></div>
      <div class="flex h-full w-[47px] items-center gap-[6px] pl-[2px]"><svg class="h-3 w-3" viewBox="0 0 12 12"><path d="M11 2L2 10h9" fill="none" stroke="#2f95f3" stroke-width="1.500"/></svg><svg class="h-3 w-3" viewBox="0 0 12 12"><path d="M2 3h7v7H2z" fill="none" stroke="#2f95f3" stroke-width="1.300"/><path d="M8 1h4v4H8z" fill="#52c48b"/></svg><svg class="h-1 w-[6px]"><use href="#dn"/></svg></div>
      <div class="flex h-full w-[20px] items-center justify-center"><svg class="h-3 w-3" viewBox="0 0 12 12"><path d="M0 1h8M0 4h12M0 7h8M0 10h12" stroke="#ddd" stroke-width="2"/></svg></div>
      <div class="flex h-full w-[82px] items-center gap-[5px] pl-[3px]"><svg class="h-3 w-3 text-[#2f95f3]"><use href="#person"/></svg><svg class="h-3 w-3"><use href="#person"/></svg><svg class="h-3 w-3"><use href="#person"/></svg><span class="pl-px">1:1</span><svg class="-ml-[2px] h-1 w-[5px]"><use href="#dn"/></svg></div>
      <div class="flex h-full w-[28px] items-center gap-[6px] pl-1"><svg class="h-[10px] w-[10px]" viewBox="0 0 12 12"><circle cx="6" cy="6" r="3" fill="none" stroke="#ddd" stroke-width="3"/><path d="M6 0v3M6 9v3M0 6h3M9 6h3M2 2l2 2M8 8l2 2M10 2L8 4M2 10l2-2" stroke="#ddd" stroke-width="1.500"/></svg><svg class="h-1 w-[5px]"><use href="#dn"/></svg></div>
      <div class="flex h-full w-[20px] items-center justify-center"><svg class="h-3 w-3" viewBox="0 0 12 12"><path d="M6 1v10M1 6h10" stroke="#ddd" stroke-width="1.500"/></svg></div>
      <div class="flex h-full w-[20px] items-center justify-center"><svg class="h-3 w-3" viewBox="0 0 12 12"><path d="M3 1h6v10H3zM5 4v5M7 4v5" fill="none" stroke="#bbb"/></svg></div>
      <div class="flex h-full w-[20px] items-center justify-center"><svg class="h-3 w-3" viewBox="0 0 12 12"><path d="M1 2h6v5H1z" fill="none" stroke="#ccc"/><circle cx="8" cy="8" r="3" fill="none" stroke="#ccc"/></svg></div>
      <div class="flex h-full w-[57px] items-center justify-between pr-1 pl-[3px]"><svg class="h-3 w-3" viewBox="0 0 12 12"><circle cx="6" cy="6" r="6" fill="#1583e0"/><path d="M3 5l3 3 4-3" fill="none" stroke="#145a9c"/></svg><svg class="h-3 w-3" viewBox="0 0 12 12"><path d="M.5 1.500h11v9H.5z" fill="none" stroke="#eee"/><path d="M7 3h3v3M5 9H2V6M7 6l3-3M5 6L2 9" fill="none" stroke="#eee"/></svg><svg class="h-3 w-3" viewBox="0 0 12 12"><path d="M0 2h12M0 6h12M0 10h12" stroke="#eee" stroke-width="1.500"/></svg></div>
    </div>
  </div>
  <!-- desktop taskbar edge -->
  <div class="flex h-[7px] border-t-2 border-[#24384a] bg-linear-to-r from-[#4a9fd0] via-[#2f86c4] to-[#1b5c9f]">
    <span class="ml-[10px] h-full w-5 rounded-t-full bg-[#a8cbe2]"></span>
    <span class="ml-[34px] h-full w-3 rounded-t-full bg-[#e8d84b]"></span>
    <span class="ml-[76px] h-full w-3 bg-[#8c5560]"></span>
    <span class="ml-4 flex h-full w-[42px] justify-center bg-[#d5e8f2]"><i class="mt-[1px] w-5 rounded-t bg-[#f2b71f]"></i></span>
    <span class="ml-1 flex h-full w-[42px] justify-center bg-[#eef3f6]"><i class="mt-[1px] w-5 rounded-t bg-[#e9b5b5]"></i></span>
  </div>
</footer>
</body>
</html>
